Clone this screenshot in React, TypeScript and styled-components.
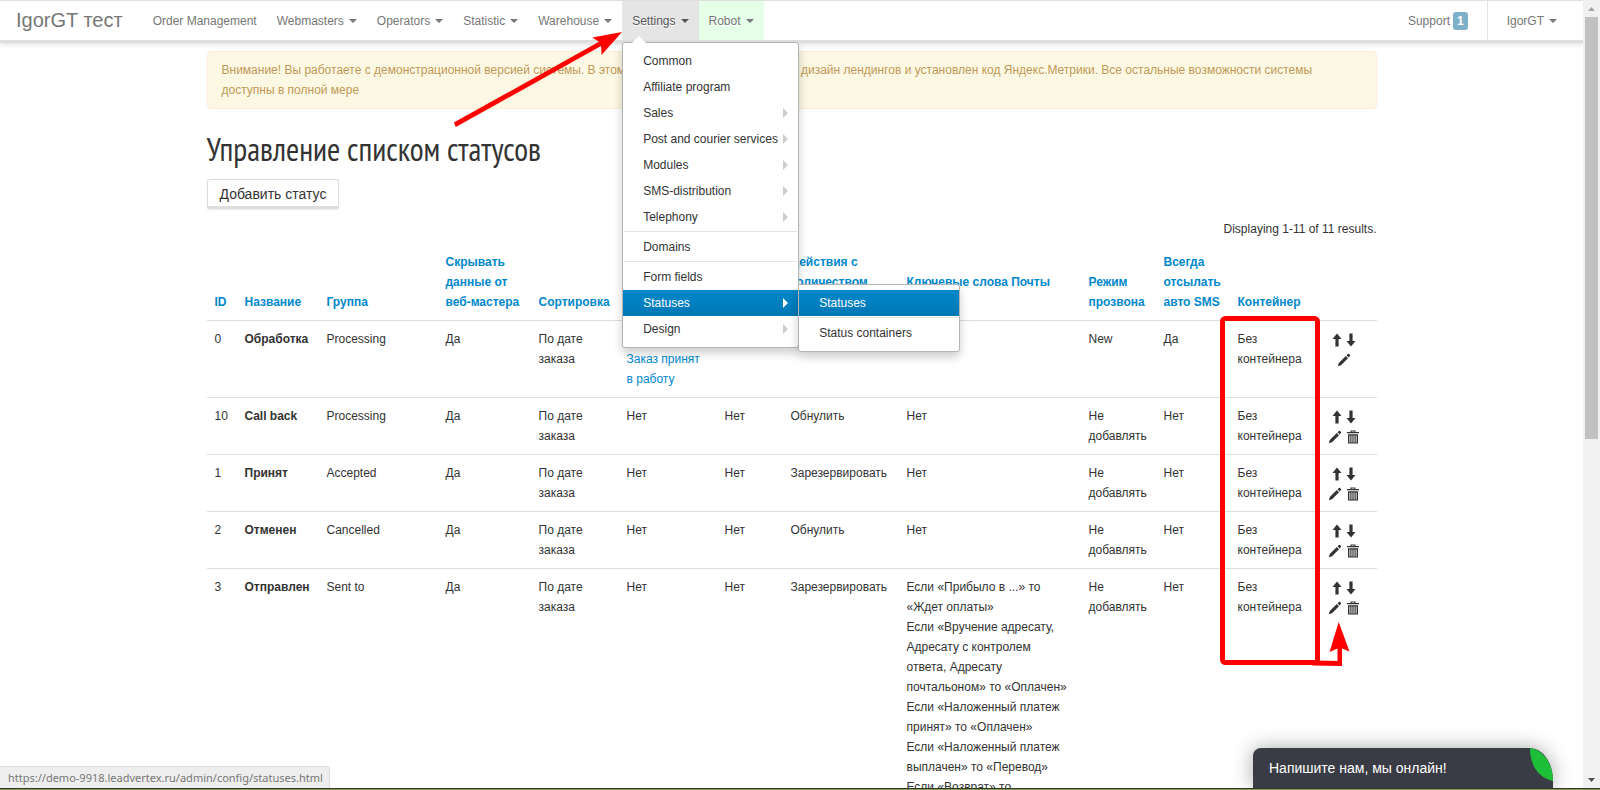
import React from "react";
import styled, { createGlobalStyle, css } from "styled-components";

const GlobalStyle = createGlobalStyle`
  *, *::before, *::after { box-sizing: border-box; }
  body {
    margin: 0;
    overflow: hidden;
    background: #fff;
    color: #333;
    font-family: "Liberation Sans", Arial, sans-serif;
    font-size: 12px;
    line-height: 20px;
  }
  a { color: #0088cc; text-decoration: none; }
  ul { list-style: none; margin: 0; padding: 0; }
  button { font: inherit; color: inherit; cursor: pointer; }
`;

const Window = styled.div`
  position: relative;
  display: flex;
  flex-direction: column;
  height: 100vh;
`;

const Screen = styled.div`
  display: flex;
  flex: 1;
  min-height: 0;
`;

const Viewport = styled.div`
  flex: 1;
  min-width: 0;
  overflow: hidden;
`;

const TaskbarEdge = styled.div`
  height: 2px;
  background: #8a9a62;
  border-top: 1px solid #2c3a1c;
`;

/* Navigation */

const Navbar = styled.nav`
  position: relative;
  z-index: 2;
  display: flex;
  justify-content: space-between;
  height: 43px;
  background: #fff;
  border-top: 1px solid #dfdfdf;
  border-bottom: 3px solid #dfdfdf;
  box-shadow: 0 1px 5px rgba(0, 0, 0, 0.15);
`;

const NavSide = styled.div`
  display: flex;
`;

const Brand = styled.a`
  padding: 9px 20px 0 16px;
  font-size: 20px;
  color: #777;
`;

const NavList = styled.ul`
  display: flex;
`;

const NavItem = styled.li<{ $divided?: boolean }>`
  position: relative;
  display: flex;
  ${(p) => p.$divided && css`
    margin-left: 9px;
    padding: 0 16px 0 9px;
    border-left: 1px solid #e5e5e5;
  `}
`;

const tones = {
  plain: "transparent",
  open: "#e5e5e5",
  green: "#e6ffe8",
};

const NavLink = styled.a<{ $tone?: keyof typeof tones }>`
  display: flex;
  align-items: center;
  gap: 5px;
  padding: 0 10px;
  white-space: nowrap;
  color: ${(p) => (p.$tone === "open" ? "#555" : "#777")};
  background: ${(p) => tones[p.$tone ?? "plain"]};
  text-shadow: 0 1px 0 #fff;
`;

const Caret = styled.span`
  border: 4px solid transparent;
  border-top-color: currentColor;
  border-bottom: 0;
`;

const Badge = styled.span`
  padding: 0 4px;
  height: 18px;
  margin-left: -2px;
  border-radius: 3px;
  background: #7fb0ca;
  color: #fff;
  font-weight: bold;
  line-height: 18px;
  text-shadow: none;
`;

/* Menus */

const Menu = styled.ul<{ $nested?: boolean }>`
  position: absolute;
  top: ${(p) => (p.$nested ? "-6px" : "41px")};
  left: ${(p) => (p.$nested ? "100%" : "0")};
  width: ${(p) => (p.$nested ? "162px" : "177px")};
  padding: 5px 0;
  background: #fff;
  border: 1px solid #b4b4b4;
  border-radius: ${(p) => (p.$nested ? "0 3px 3px 3px" : "3px")};
  box-shadow: 0 5px 10px rgba(0, 0, 0, 0.2);
  ${(p) => !p.$nested && css`
    &::before {
      content: "";
      position: absolute;
      top: -7px;
      left: 9px;
      border: 7px solid transparent;
      border-top: 0;
      border-bottom-color: #fff;
    }
  `}
`;

const MenuItem = styled.li`
  position: relative;
`;

const MenuLink = styled.a<{ $active?: boolean }>`
  display: flex;
  align-items: center;
  justify-content: space-between;
  height: 26px;
  padding: 0 10px 0 20px;
  white-space: nowrap;
  color: ${(p) => (p.$active ? "#fff" : "#333")};
  background: ${(p) => (p.$active ? "linear-gradient(#0088cc, #0077b3)" : "none")};
`;

const SideCaret = styled.span<{ $active?: boolean }>`
  border: 5px solid transparent;
  border-left-color: ${(p) => (p.$active ? "#fff" : "#ccc")};
  border-right: 0;
`;

const MenuDivider = styled.li`
  height: 1px;
  margin: 1px 1px 2px;
  background: #e5e5e5;
`;

/* Content */

const Container = styled.main`
  max-width: 1170px;
  margin: 0 auto;
  padding-top: 8px;
`;

const Alert = styled.p`
  margin: 0;
  padding: 8px 35px 8px 14px;
  border: 1px solid #fbeed5;
  border-radius: 4px;
  background: #fcf8e3;
  color: #c09853;
  text-shadow: 0 1px 0 rgba(255, 255, 255, 0.5);
`;

const Title = styled.h1`
  margin: 20px 0 10px;
  font-family: "PT Sans Narrow", Roboto, sans-serif;
  font-size: 32px;
  font-weight: normal;
  line-height: 40px;
  white-space: nowrap;
`;

const AddButton = styled.button`
  display: block;
  height: 30px;
  padding: 2px 12px 0;
  background: #fff;
  border: 1px solid #ddd;
  border-bottom-width: 3px;
  border-radius: 3px;
  box-shadow: 0 1px 2px rgba(0, 0, 0, 0.1);
  font-size: 14px;
`;

const Summary = styled.p`
  margin: 10px 0 5px;
  text-align: right;
`;

const Table = styled.table`
  width: 100%;
  table-layout: fixed;
  border-collapse: collapse;
`;

const Th = styled.th`
  padding: 8px;
  vertical-align: bottom;
  text-align: left;
  a { white-space: pre-line; }
`;

const Td = styled.td<{ $strong?: boolean }>`
  padding: 8px;
  vertical-align: top;
  white-space: pre-line;
  border-top: 1px solid #ddd;
  font-weight: ${(p) => (p.$strong ? "bold" : "normal")};
`;

const ActionLine = styled.div<{ $gap?: boolean }>`
  display: flex;
  align-items: center;
  justify-content: center;
  gap: ${(p) => (p.$gap ? "4px" : "0")};
  height: 20px;
  padding-top: 2px;
`;

const IconButton = styled.button`
  display: flex;
  padding: 0;
  border: 0;
  background: none;
`;

/* Browser chrome and chat */

const Scrollbar = styled.div`
  display: flex;
  flex-direction: column;
  align-items: center;
  width: 17px;
  background: #f1f1f1;
`;

const ScrollButton = styled.button`
  display: flex;
  align-items: center;
  justify-content: center;
  width: 17px;
  height: 17px;
  padding: 0;
  border: 0;
  background: none;
`;

const ScrollTrack = styled.div`
  flex: 1;
  width: 13px;
`;

const ScrollThumb = styled.div`
  height: 56%;
  background: #c1c1c1;
`;

const StatusBubble = styled.div`
  position: absolute;
  left: 0;
  bottom: 2px;
  height: 22px;
  padding: 1px 6px 0 8px;
  background: #eee;
  border: 1px solid #ddd;
  border-width: 1px 1px 0 0;
  border-radius: 0 4px 0 0;
  color: #777;
  font-family: "Noto Sans", sans-serif;
  font-size: 11px;
`;

const ChatTab = styled.button`
  position: absolute;
  right: 47px;
  bottom: 2px;
  width: 300px;
  height: 40px;
  padding: 0 16px;
  border: 0;
  border-radius: 8px 23px 0 0 / 8px 33px 0 0;
  background: #393c44;
  box-shadow: 0 0 20px rgba(0, 0, 0, 0.35);
  clip-path: inset(-30px -30px 0 -30px);
  color: #fff;
  font-size: 14px;
  text-align: left;
`;

const ChatLeaf = styled.svg`
  position: absolute;
  top: 0;
  right: 0;
`;

const Markup = styled.svg`
  position: absolute;
  top: 0;
  left: 50%;
  z-index: 3;
  margin-left: -800px;
  pointer-events: none;
`;

const iconPaths = {
  up: "M7 0.5 L11.5 6 H8.6 V13.5 H5.4 V6 H2.5 Z",
  down: "M5.4 0.5 H8.6 V8 H11.5 L7 13.5 L2.5 8 H5.4 Z",
  pencil: "M0.8 13.2 L1.8 10 L8.8 3 L11 5.2 L4 12.2 Z M9.5 2.3 L10.9 1 Q11.5 0.6 12.1 1.1 L12.8 1.8 Q13.3 2.4 12.9 3 L11.7 4.5 Z",
  trash: "M4.5 2 V0.5 H9.5 V2 H13 V3.3 H1 V2 Z M5.6 2 H8.4 V1.5 H5.6 Z M2 4.2 H12 V13.5 H2 Z M3.4 5.4 V12.4 H4.3 V5.4 Z M5.5 5.4 V12.4 H6.4 V5.4 Z M7.6 5.4 V12.4 H8.5 V5.4 Z M9.7 5.4 V12.4 H10.6 V5.4 Z",
};

function Action({ icon, label }: { icon: keyof typeof iconPaths; label: string }) {
  return (
    <IconButton type="button" aria-label={label}>
      <svg width="14" height="14" viewBox="0 0 14 14" fill="#333" fillRule="evenodd">
        <path d={iconPaths[icon]} />
      </svg>
    </IconButton>
  );
}

const navBefore = ["Webmasters", "Operators", "Statistic", "Warehouse"];

type Entry = { label: string; arrow?: boolean; active?: boolean } | "divider";

const settingsMenu: Entry[] = [
  { label: "Common" },
  { label: "Affiliate program" },
  { label: "Sales", arrow: true },
  { label: "Post and courier services", arrow: true },
  { label: "Modules", arrow: true },
  { label: "SMS-distribution", arrow: true },
  { label: "Telephony", arrow: true },
  "divider",
  { label: "Domains" },
  "divider",
  { label: "Form fields" },
  { label: "Statuses", arrow: true, active: true },
  { label: "Design", arrow: true },
];

const columns: { title: string; width?: number }[] = [
  { title: "ID", width: 30 },
  { title: "Название", width: 82 },
  { title: "Группа", width: 119 },
  { title: "Скрывать\nданные от\nвеб-мастера", width: 93 },
  { title: "Сортировка", width: 88 },
  { title: "SMS", width: 98 },
  { title: "Email", width: 66 },
  { title: "Действия с\nколичеством\nтовара", width: 116 },
  { title: "Ключевые слова Почты\n\u00a0", width: 182 },
  { title: "Режим\nпрозвона", width: 75 },
  { title: "Всегда\nотсылать\nавто SMS", width: 74 },
  { title: "Контейнер", width: 82 },
  { title: "" },
];

const mailRules = [
  "Если «Прибыло в ...» то\n«Ждет оплаты»",
  "Если «Вручение адресату,\nАдресату с контролем\nответа, Адресату\nпочтальоном» то «Оплачен»",
  "Если «Наложенный платеж\nпринят» то «Оплачен»",
  "Если «Наложенный платеж\nвыплачен» то «Перевод»",
  "Если «Возврат» то\n«Возврат»",
].join("\n");

interface Status {
  id: number;
  name: string;
  group: string;
  sms: string;
  template?: string;
  email: string;
  stock: string;
  mail: string;
  dial: string;
  auto: string;
  fixed?: boolean;
}

const usual = { sms: "Нет", email: "Нет", mail: "Нет", dial: "Не\nдобавлять", auto: "Нет" };

const statuses: Status[] = [
  { id: 0, name: "Обработка", group: "Processing", sms: "Да", template: "Заказ принят\nв работу", email: "Нет", stock: "Обнулить", mail: "Нет", dial: "New", auto: "Да", fixed: true },
  { ...usual, id: 10, name: "Call back", group: "Processing", stock: "Обнулить" },
  { ...usual, id: 1, name: "Принят", group: "Accepted", stock: "Зарезервировать" },
  { ...usual, id: 2, name: "Отменен", group: "Cancelled", stock: "Обнулить" },
  { ...usual, id: 3, name: "Отправлен", group: "Sent to", stock: "Зарезервировать", mail: mailRules },
];

function StatusRow({ s }: { s: Status }) {
  return (
    <tr>
      <Td>{s.id}</Td>
      <Td $strong>{s.name}</Td>
      <Td>{s.group}</Td>
      <Td>Да</Td>
      <Td>{"По дате\nзаказа"}</Td>
      <Td>
        {s.sms}
        {s.template && <>{"\n"}<a href="#template">{s.template}</a></>}
      </Td>
      <Td>{s.email}</Td>
      <Td>{s.stock}</Td>
      <Td>{s.mail}</Td>
      <Td>{s.dial}</Td>
      <Td>{s.auto}</Td>
      <Td>{"Без\nконтейнера"}</Td>
      <Td>
        <ActionLine>
          <Action icon="up" label="Move up" />
          <Action icon="down" label="Move down" />
        </ActionLine>
        <ActionLine $gap>
          <Action icon="pencil" label="Edit" />
          {!s.fixed && <Action icon="trash" label="Delete" />}
        </ActionLine>
      </Td>
    </tr>
  );
}

function SettingsMenu() {
  return (
    <Menu>
      {settingsMenu.map((e, i) =>
        e === "divider" ? (
          <MenuDivider key={i} />
        ) : (
          <MenuItem key={i}>
            <MenuLink href="#" $active={e.active}>
              {e.label}
              {e.arrow && <SideCaret $active={e.active} />}
            </MenuLink>
            {e.active && (
              <Menu $nested>
                <MenuItem><MenuLink href="#" $active>Statuses</MenuLink></MenuItem>
                <MenuDivider />
                <MenuItem><MenuLink href="#">Status containers</MenuLink></MenuItem>
              </Menu>
            )}
          </MenuItem>
        )
      )}
    </Menu>
  );
}

export default function App() {
  return (
    <Window>
      <GlobalStyle />
      <Screen>
        <Viewport>
          <Navbar>
            <NavSide>
              <Brand href="#">IgorGT тест</Brand>
              <NavList>
                <NavItem><NavLink href="#">Order Management</NavLink></NavItem>
                {navBefore.map((label) => (
                  <NavItem key={label}>
                    <NavLink href="#">{label}<Caret /></NavLink>
                  </NavItem>
                ))}
                <NavItem>
                  <NavLink href="#" $tone="open">Settings<Caret /></NavLink>
                  <SettingsMenu />
                </NavItem>
                <NavItem><NavLink href="#" $tone="green">Robot<Caret /></NavLink></NavItem>
              </NavList>
            </NavSide>
            <NavList>
              <NavItem><NavLink href="#">Support<Badge>1</Badge></NavLink></NavItem>
              <NavItem $divided><NavLink href="#">IgorGT<Caret /></NavLink></NavItem>
            </NavList>
          </Navbar>
          <Container>
            <Alert>
              Внимание! Вы работаете с демонстрационной версией системы. В этом режиме невозможно изменять дизайн лендингов и
              установлен код Яндекс.Метрики. Все остальные возможности системы доступны в полной мере
            </Alert>
            <Title>Управление списком статусов</Title>
            <AddButton type="button">Добавить статус</AddButton>
            <Summary>Displaying 1-11 of 11 results.</Summary>
            <Table>
              <colgroup>
                {columns.map((c, i) => <col key={i} width={c.width} />)}
              </colgroup>
              <thead>
                <tr>
                  {columns.map((c, i) => (
                    <Th key={i} scope="col">{c.title && <a href="#sort">{c.title}</a>}</Th>
                  ))}
                </tr>
              </thead>
              <tbody>
                {statuses.map((s) => <StatusRow key={s.id} s={s} />)}
              </tbody>
            </Table>
          </Container>
        </Viewport>
        <Scrollbar>
          <ScrollButton type="button" aria-label="Scroll up">
            <svg width="7" height="4" viewBox="0 0 7 4" fill="#a3a3a3"><path d="M3.5 0 L7 4 H0 Z" /></svg>
          </ScrollButton>
          <ScrollTrack><ScrollThumb /></ScrollTrack>
          <ScrollButton type="button" aria-label="Scroll down">
            <svg width="7" height="4" viewBox="0 0 7 4" fill="#505050"><path d="M0 0 H7 L3.5 4 Z" /></svg>
          </ScrollButton>
        </Scrollbar>
      </Screen>
      <TaskbarEdge />
      <StatusBubble>https://demo-9918.leadvertex.ru/admin/config/statuses.html</StatusBubble>
      <ChatTab type="button">
        Напишите нам, мы онлайн!
        <ChatLeaf width="23" height="33" viewBox="0 0 23 33" fill="#1dbf39">
          <path d="M0 0 C13 2 23 15 23 33 C9 30 0 18 0 0 Z" />
        </ChatLeaf>
      </ChatTab>
      <Markup width="1600" height="700" viewBox="0 0 1600 700" fill="#f00" aria-hidden="true">
        <path d="M453.8 122.5 L599 41.8 L592.3 37.5 L622 32 L601.6 55 L601 46 L455.8 127 Z" />
        <rect x="1222.5" y="318.5" width="95" height="344" rx="3" fill="none" stroke="#f00" strokeWidth="5" />
        <path d="M1318 660.5 L1337.5 661 V648.5 L1329.5 652 L1338.7 622 L1349.5 651.5 L1342 648.5 V666 L1312 665.5 Z" />
      </Markup>
    </Window>
  );
}
